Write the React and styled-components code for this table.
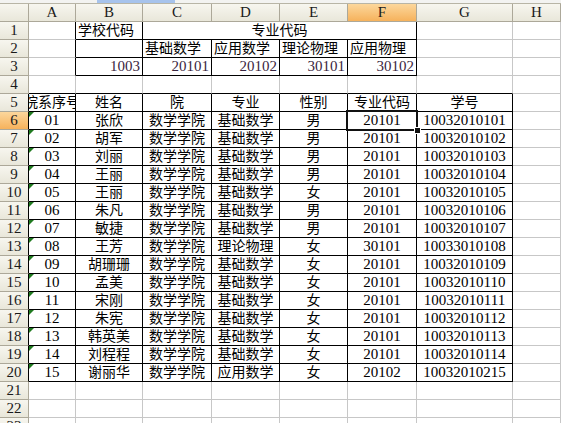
import React from "react";
import styled, { createGlobalStyle } from "styled-components";

const Global = createGlobalStyle`
  html, body { margin: 0; padding: 0; background: #ffffff; }
  #root { width: 561px; height: 423px; overflow: hidden; }
`;

const Frame = styled.div`
  width: 561px;
  height: 423px;
  overflow: hidden;
  background: #ffffff;
  display: flex;
  flex-direction: column;
`;

const TopStrip = styled.div`
  height: 4px;
  flex: none;
  background: #f3f3f1;
  display: flex;
  border-bottom: 1px solid #b8b5a6;
  box-sizing: border-box;
`;

const Highlight = styled.div`
  margin-left: ${(p) => p.$left}px;
  width: ${(p) => p.$width}px;
  background: #a7c3ec;
`;

const Sheet = styled.div`
  display: grid;
  grid-template-columns: 29px 47px 67px 69px 68px 68px 69px 96px 48px;
  grid-auto-rows: 18px;
  font-family: "Liberation Serif", "Noto Sans CJK SC", serif;
  font-size: 14px;
  color: #000;
`;

const HeadCell = styled.div`
  box-sizing: border-box;
  display: flex;
  align-items: center;
  justify-content: center;
  background: ${(p) =>
    p.$active
      ? "linear-gradient(#fcd79c, #f6b25c)"
      : "linear-gradient(#f7f6ef, #e9e7da)"};
  border-right: 1px solid ${(p) => p.$edge || "#aca899"};
  border-bottom: 1px solid #aca899;
  font-family: "Liberation Serif", serif;
  font-size: 15px;
  color: #1a1a1a;
  line-height: 17px;
`;

const Cell = styled.div`
  box-sizing: border-box;
  position: relative;
  display: flex;
  align-items: center;
  justify-content: ${(p) =>
    p.$align === "center" ? "center" : p.$align === "right" ? "flex-end" : "flex-start"};
  padding: 0 2px;
  overflow: ${(p) => (p.$selected ? "visible" : "hidden")};
  white-space: nowrap;
  line-height: 17px;
  border-right: 1px solid ${(p) => p.$right};
  border-bottom: 1px solid ${(p) => p.$bottom};
  grid-column: ${(p) => (p.$span ? `span ${p.$span}` : "auto")};
  font-size: ${(p) => (p.$num ? "15px" : "14px")};
  color: ${(p) => (p.$purple ? "#3a2540" : "#000")};
`;

const TextMark = styled.span`
  position: absolute;
  top: 0;
  left: 0;
  width: 0;
  height: 0;
  border-top: 5px solid #1f7a1f;
  border-right: 5px solid transparent;
`;

const Selection = styled.div`
  position: absolute;
  top: -2px;
  left: -2px;
  right: -2px;
  bottom: -2px;
  border: 2px solid #111;
  z-index: 2;
  pointer-events: none;
`;

const FillHandle = styled.div`
  position: absolute;
  right: -5px;
  bottom: -5px;
  width: 5px;
  height: 5px;
  background: #111;
  border: 1px solid #fff;
  z-index: 3;
`;

const COLS = ["A", "B", "C", "D", "E", "F", "G", "H"];
const GRID = "#c7c7c7";
const INK = "#000";

const students = [
  ["01", "张欣", "数学学院", "基础数学", "男", "20101", "10032010101"],
  ["02", "胡军", "数学学院", "基础数学", "男", "20101", "10032010102"],
  ["03", "刘丽", "数学学院", "基础数学", "男", "20101", "10032010103"],
  ["04", "王丽", "数学学院", "基础数学", "男", "20101", "10032010104"],
  ["05", "王丽", "数学学院", "基础数学", "女", "20101", "10032010105"],
  ["06", "朱凡", "数学学院", "基础数学", "男", "20101", "10032010106"],
  ["07", "敏捷", "数学学院", "基础数学", "男", "20101", "10032010107"],
  ["08", "王芳", "数学学院", "理论物理", "女", "30101", "10033010108"],
  ["09", "胡珊珊", "数学学院", "基础数学", "女", "20101", "10032010109"],
  ["10", "孟美", "数学学院", "基础数学", "女", "20101", "10032010110"],
  ["11", "宋刚", "数学学院", "基础数学", "女", "20101", "10032010111"],
  ["12", "朱宪", "数学学院", "基础数学", "女", "20101", "10032010112"],
  ["13", "韩英美", "数学学院", "基础数学", "女", "20101", "10032010113"],
  ["14", "刘程程", "数学学院", "基础数学", "女", "20101", "10032010114"],
  ["15", "谢丽华", "数学学院", "应用数学", "女", "20102", "10032010215"],
];

function bordered(r, c) {
  if (r >= 5 && r <= 20 && c >= 0 && c <= 6) return true;
  if (r >= 1 && r <= 3 && c >= 1 && c <= 5) return true;
  return false;
}

// cell content: { text, align, num, purple, mark, span }
function cellData(r, c) {
  if (r === 1) {
    if (c === 1) return { text: "学校代码" };
    if (c === 2) return { text: "专业代码", align: "center", span: 4 };
  }
  if (r === 2) {
    const t = { 2: "基础数学", 3: "应用数学", 4: "理论物理", 5: "应用物理" };
    if (t[c]) return { text: t[c] };
  }
  if (r === 3) {
    const t = { 1: "1003", 2: "20101", 3: "20102", 4: "30101", 5: "30102" };
    if (t[c]) return { text: t[c], align: "right", num: true, purple: true };
  }
  if (r === 5) {
    const t = ["院系序号", "姓名", "院", "专业", "性别", "专业代码", "学号"];
    if (c <= 6) return { text: t[c], align: "center" };
  }
  if (r >= 6 && r <= 20 && c <= 6) {
    const v = students[r - 6][c];
    return {
      text: v,
      align: "center",
      num: c === 0 || c === 5 || c === 6,
      mark: c === 0,
    };
  }
  return { text: "" };
}

function Row({ r }) {
  const cells = [];
  let c = 0;
  while (c < 8) {
    const d = cellData(r, c);
    const span = d.span || 1;
    const last = c + span - 1;
    const right = bordered(r, last) || bordered(r, last + 1) ? INK : GRID;
    const bottom = bordered(r, c) || bordered(r + 1, c) ? INK : GRID;
    const selected = r === 6 && c === 5;
    cells.push(
      <Cell
        key={c}
        $right={right}
        $bottom={bottom}
        $align={d.align}
        $num={d.num}
        $purple={d.purple}
        $span={d.span}
        $selected={selected}
      >
        {d.mark && <TextMark />}
        {d.text}
        {selected && <Selection />}
        {selected && <FillHandle />}
      </Cell>
    );
    c += span;
  }
  return (
    <>
      <HeadCell $active={r === 6} $edge={r >= 5 && r <= 20 ? INK : undefined}>
        {r}
      </HeadCell>
      {cells}
    </>
  );
}

export default function App() {
  const rows = Array.from({ length: 23 }, (_, i) => i + 1);
  return (
    <Frame>
      <Global />
      <TopStrip>
        <Highlight $left={97} $width={78} />
      </TopStrip>
      <Sheet>
        <HeadCell />
        {COLS.map((l) => (
          <HeadCell key={l} $active={l === "F"}>
            {l}
          </HeadCell>
        ))}
        {rows.map((r) => (
          <Row key={r} r={r} />
        ))}
      </Sheet>
    </Frame>
  );
}
